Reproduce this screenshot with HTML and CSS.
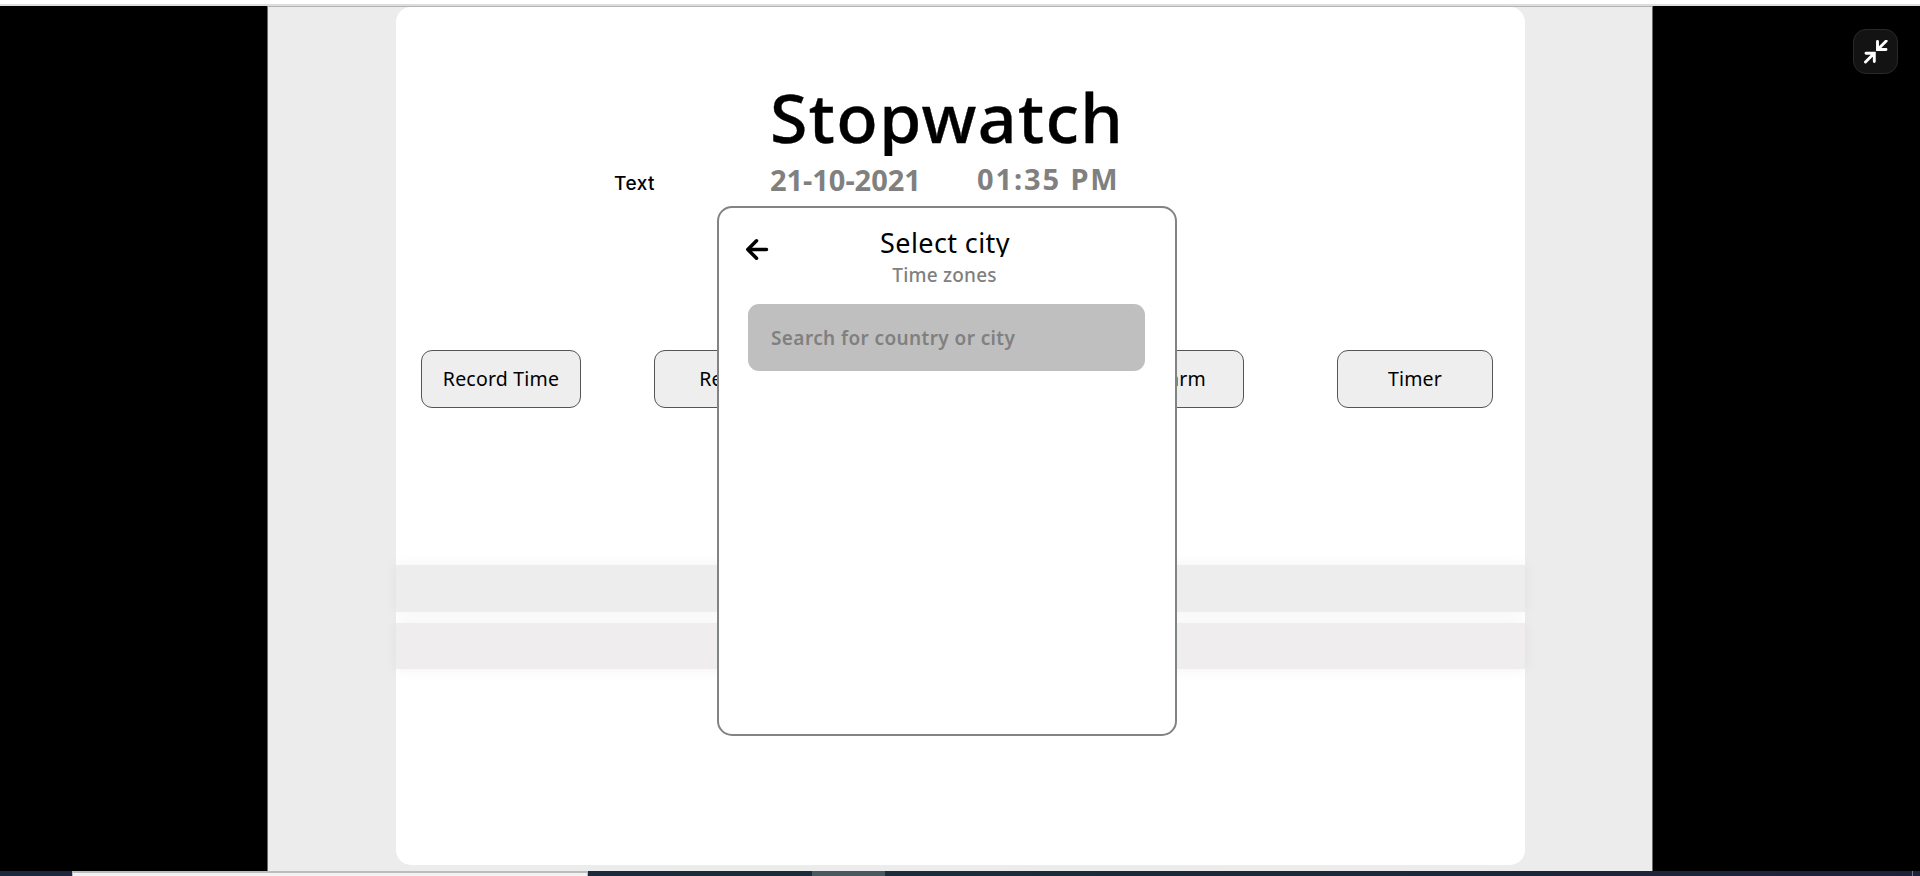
FILE: index.html
```html
<!DOCTYPE html>
<html lang="en">
<head>
<meta charset="utf-8">
<title>Stopwatch</title>
<link rel="stylesheet" href="styles.css">
</head>
<body>
<div class="topbar"></div>
<div class="viewer">
  <main class="stage">
    <section class="card">
      <h1 class="title">Stopwatch</h1>
      <div class="meta">
        <span class="label">Text</span>
        <span class="date">21-10-2021</span>
        <span class="time">01:35 PM</span>
      </div>
      <div class="actions">
        <button class="btn btn-record">Record Time</button>
        <button class="btn btn-reset">Reset</button>
        <button class="btn btn-alarm">Alarm</button>
        <button class="btn btn-timer">Timer</button>
      </div>
      <div class="bars">
        <div class="bar"></div>
        <div class="bar bar-alt"></div>
      </div>
    </section>
  </main>
  <div class="dialog">
    <div class="dialog-head">
      <svg class="back" viewBox="0 0 24 24"><path d="M21.500 11.500H3M11.500 2.800L2.800 11.500L11.500 20.200"/></svg>
      <div class="heading">
        <div class="dialog-title">Select city</div>
        <div class="subtitle">Time zones</div>
      </div>
    </div>
    <div class="search">Search for country or city</div>
  </div>
  <div class="exit">
    <svg viewBox="0 0 24 24"><path d="M22.200 1L14 9.200M13.500 1.500V9.500H22M1.500 22L10 13.500M2 13.200H10.300V21.500"/></svg>
  </div>
</div>
<div class="taskbar"><div class="task-search"></div><div class="task-item"></div><div class="task-edge"></div></div>
</body>
</html>
```
FILE: styles.css
```css
* { box-sizing: border-box; }
body { margin: 0; width: 1920px; height: 876px; overflow: hidden; background: #fff; font-family: "Noto Sans", sans-serif; color: #000; }
.topbar { height: 6px; border-bottom: 2px solid #dcdedc; background: #fff; }
.viewer { position: relative; height: 865px; padding: 0 267px; background: #000; }
.stage { height: 865px; padding: 0 127px 0 128px; background: #ececec; border-left: 1px solid #6a6a6a; border-right: 1px solid #6a6a6a; border-top: 1px solid #b4b4b4; }
.card { height: 858px; background: #fff; border-radius: 15px; display: flex; flex-direction: column; }
.title { height: 79px; overflow: hidden; margin: 70px 0 0 374px; font-size: 68px; line-height: 79px; font-weight: 500; letter-spacing: 1.400px; -webkit-text-stroke: .4px #000; white-space: nowrap; }
.meta { display: flex; align-items: center; height: 44px; margin-top: 1px; padding-left: 218px; white-space: nowrap; }
.label { width: 156px; padding-top: 9px; font: 500 19px/24px Inter, sans-serif; letter-spacing: .5px; }
.date, .time { font-size: 29px; line-height: 40px; font-weight: 700; color: #808080; }
.date { width: 207px; padding-top: 1px; letter-spacing: -.05px; }
.time { letter-spacing: 1.900px; }
.actions { display: flex; margin-top: 149px; padding-left: 25px; }
.btn { height: 58px; padding: 0; background: #eee; border: 1px solid #555; border-radius: 11px; font: 400 19.500px/56px "Noto Sans", sans-serif; color: #000; letter-spacing: .2px; white-space: nowrap; }
.btn-record { width: 160px; }
.btn-reset { width: 142px; margin-left: 73px; }
.btn-alarm { width: 132px; margin-left: 316px; }
.btn-timer { width: 156px; margin-left: 93px; }
.bars { display: flex; flex-direction: column; gap: 11px; margin-top: 157px; }
.bar { height: 47px; background: #ededed; box-shadow: 0 0 13px rgba(0,0,0,.055); }
.bar-alt { height: 46px; background: #efedee; }
.dialog { position: absolute; left: 717px; top: 200px; width: 460px; height: 530px; padding: 21px 30px 0 29px; background: #fff; border: 2px solid #808484; border-radius: 15px; }
.dialog-head { display: flex; height: 75px; }
.back { width: 24px; height: 24px; margin: 9px 0 0 -3px; fill: none; stroke: #000; stroke-width: 3.500; stroke-linecap: round; stroke-linejoin: round; }
.heading { flex: 1; text-align: center; padding-right: 24px; }
.dialog-title { height: 28px; overflow: hidden; font-size: 27px; line-height: 27px; letter-spacing: .4px; white-space: nowrap; }
.subtitle { margin-top: 4px; padding-right: 1px; font-size: 19px; line-height: 28px; font-weight: 500; color: #808080; letter-spacing: .2px; }
.search { height: 67px; padding: 1px 0 0 23px; border-radius: 11px; background: #bfbfbf; color: #808080; font-size: 19px; line-height: 67px; font-weight: 600; letter-spacing: .4px; white-space: nowrap; }
.exit { position: absolute; left: 1853px; top: 23px; width: 45px; height: 45px; display: flex; align-items: center; justify-content: center; background: #131313; border: 1px solid #292929; border-radius: 13px; }
.exit svg { width: 24px; height: 24px; fill: none; stroke: #fff; stroke-width: 2.900; stroke-linecap: round; }
.taskbar { display: flex; height: 5px; background: linear-gradient(90deg, #1c2740, #1b2c3a 50%, #1d223b); }
.task-search { width: 516px; margin-left: 72px; background: #f2f2f2; border: 1px solid #bcbcbc; border-top-width: 2px; border-bottom: 0; }
.task-item { width: 73px; margin-left: 224px; background: #4a5860; }
.task-edge { width: 1px; margin-left: 1027px; background: #707684; }
```
